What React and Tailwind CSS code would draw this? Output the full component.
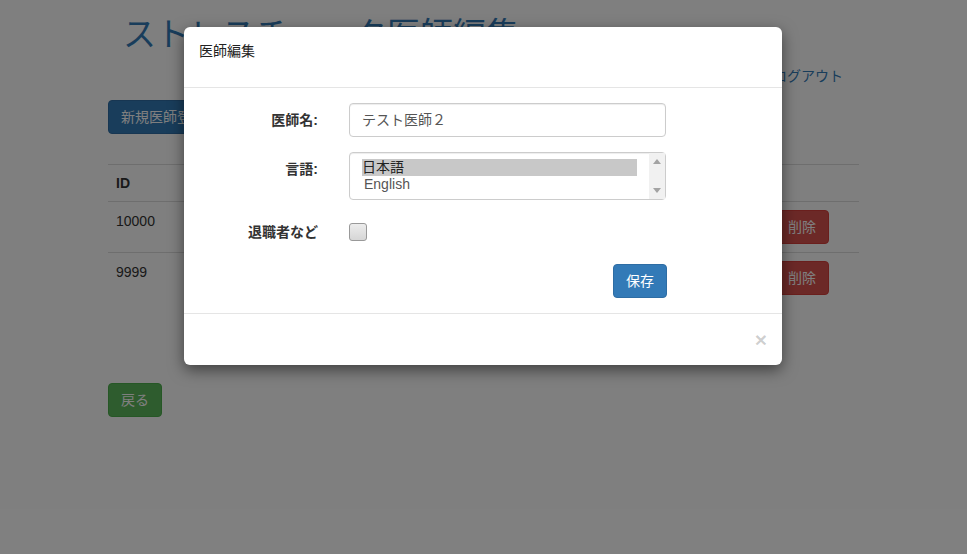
import React from "react";

const font = { fontFamily: '"Liberation Sans", "Noto Sans CJK JP", sans-serif' };

function Page() {
  return (
    <div className="min-h-[554px] bg-white text-[14px] leading-[20px] text-[#333]" style={font}>
      <div className="mx-auto w-[751px]">
        <div className="flex flex-col">
          <h1 className="pl-[15px] pt-[16px] text-[33px] leading-[38px] font-normal text-[#337ab7]">
            ストレスチェック医師編集
          </h1>
          <div className="flex justify-end pr-[16px] pt-[12px]">
            <a className="text-[#337ab7]">ログアウト</a>
          </div>
          <div className="pt-[14px]">
            <button className="h-[34px] rounded-[4px] border border-[#2e6da4] bg-[#337ab7] px-[12px] text-white">
              新規医師登録
            </button>
          </div>
          <div className="mt-[30px] border-t border-[#ddd]">
            <div className="flex h-[37px] items-center border-b border-[#ddd] px-[8px] font-bold">ID</div>
            <div className="flex h-[51px] border-b border-[#ddd] px-[8px] pt-[8px]">
              <span className="pt-[1px]">10000</span>
              <button className="ml-auto mr-[22px] h-[34px] rounded-[4px] border border-[#d43f3a] bg-[#d9534f] px-[12px] text-white">
                削除
              </button>
            </div>
            <div className="flex h-[51px] px-[8px] pt-[8px]">
              <span className="pt-[1px]">9999</span>
              <button className="ml-auto mr-[22px] h-[34px] rounded-[4px] border border-[#d43f3a] bg-[#d9534f] px-[12px] text-white">
                削除
              </button>
            </div>
          </div>
          <div className="pt-[79px]">
            <button className="h-[34px] rounded-[4px] border border-[#4cae4c] bg-[#5cb85c] px-[12px] text-white">
              戻る
            </button>
          </div>
        </div>
      </div>
    </div>
  );
}

function Modal() {
  return (
    <div
      className="absolute left-[184px] top-[27px] w-[598px] rounded-[6px] bg-white text-[14px] leading-[20px] text-[#333] shadow-[0_5px_15px_rgba(0,0,0,0.5)]"
      style={font}
    >
      <div className="h-[61px] border-b border-[#e5e5e5] px-[15px] pt-[14px]">
        <div className="text-[#222]">医師編集</div>
      </div>
      <div className="flex flex-col gap-[15px] px-[0px] pb-[15px] pt-[15px]">
        <div className="flex items-start">
          <label className="w-[134px] pt-[7px] text-right font-bold">医師名:</label>
          <div className="ml-[31px] flex h-[34px] w-[317px] items-center rounded-[4px] border border-[#ccc] px-[12px] text-[#555] shadow-[inset_0_1px_1px_rgba(0,0,0,0.075)]">
            テスト医師２
          </div>
        </div>
        <div className="flex items-start">
          <label className="w-[134px] pt-[7px] text-right font-bold">言語:</label>
          <div className="ml-[31px] flex h-[48px] w-[317px] rounded-[4px] border border-[#ccc] shadow-[inset_0_1px_1px_rgba(0,0,0,0.075)]">
            <div className="flex flex-1 flex-col pl-[12px] pr-[12px] pt-[6px] text-[14px] leading-[17px]">
              <div className="bg-[#c8c8c8] text-[#222]">日本語</div>
              <div className="pl-[2px] text-[#555]">English</div>
            </div>
            <div className="flex w-[16px] flex-col items-center justify-between bg-[#f1f1f1] py-[6px]">
              <svg width="8" height="5" viewBox="0 0 8 5">
                <path d="M0 5 L4 0 L8 5 Z" fill="#a3a3a3" />
              </svg>
              <svg width="8" height="5" viewBox="0 0 8 5">
                <path d="M0 0 L4 5 L8 0 Z" fill="#a3a3a3" />
              </svg>
            </div>
          </div>
        </div>
        <div className="flex items-center pt-[7px]">
          <label className="w-[134px] text-right font-bold">退職者など</label>
          <div className="ml-[31px] h-[18px] w-[18px] rounded-[3px] border border-[#999] bg-gradient-to-b from-[#ececec] to-[#d6d6d6]" />
        </div>
        <div className="flex pt-[7px]">
          <div className="ml-[429px] flex h-[34px] w-[54px] items-center justify-center rounded-[4px] border border-[#2e6da4] bg-[#337ab7] text-white">
            保存
          </div>
        </div>
      </div>
      <div className="flex h-[52px] items-center justify-end border-t border-[#e5e5e5] pr-[15px]">
        <span className="text-[21px] font-bold leading-[21px] text-black/20">×</span>
      </div>
    </div>
  );
}

export default function App() {
  return (
    <div className="relative h-[554px] overflow-hidden">
      <Page />
      <div className="absolute inset-0 bg-black/50" />
      <Modal />
    </div>
  );
}
